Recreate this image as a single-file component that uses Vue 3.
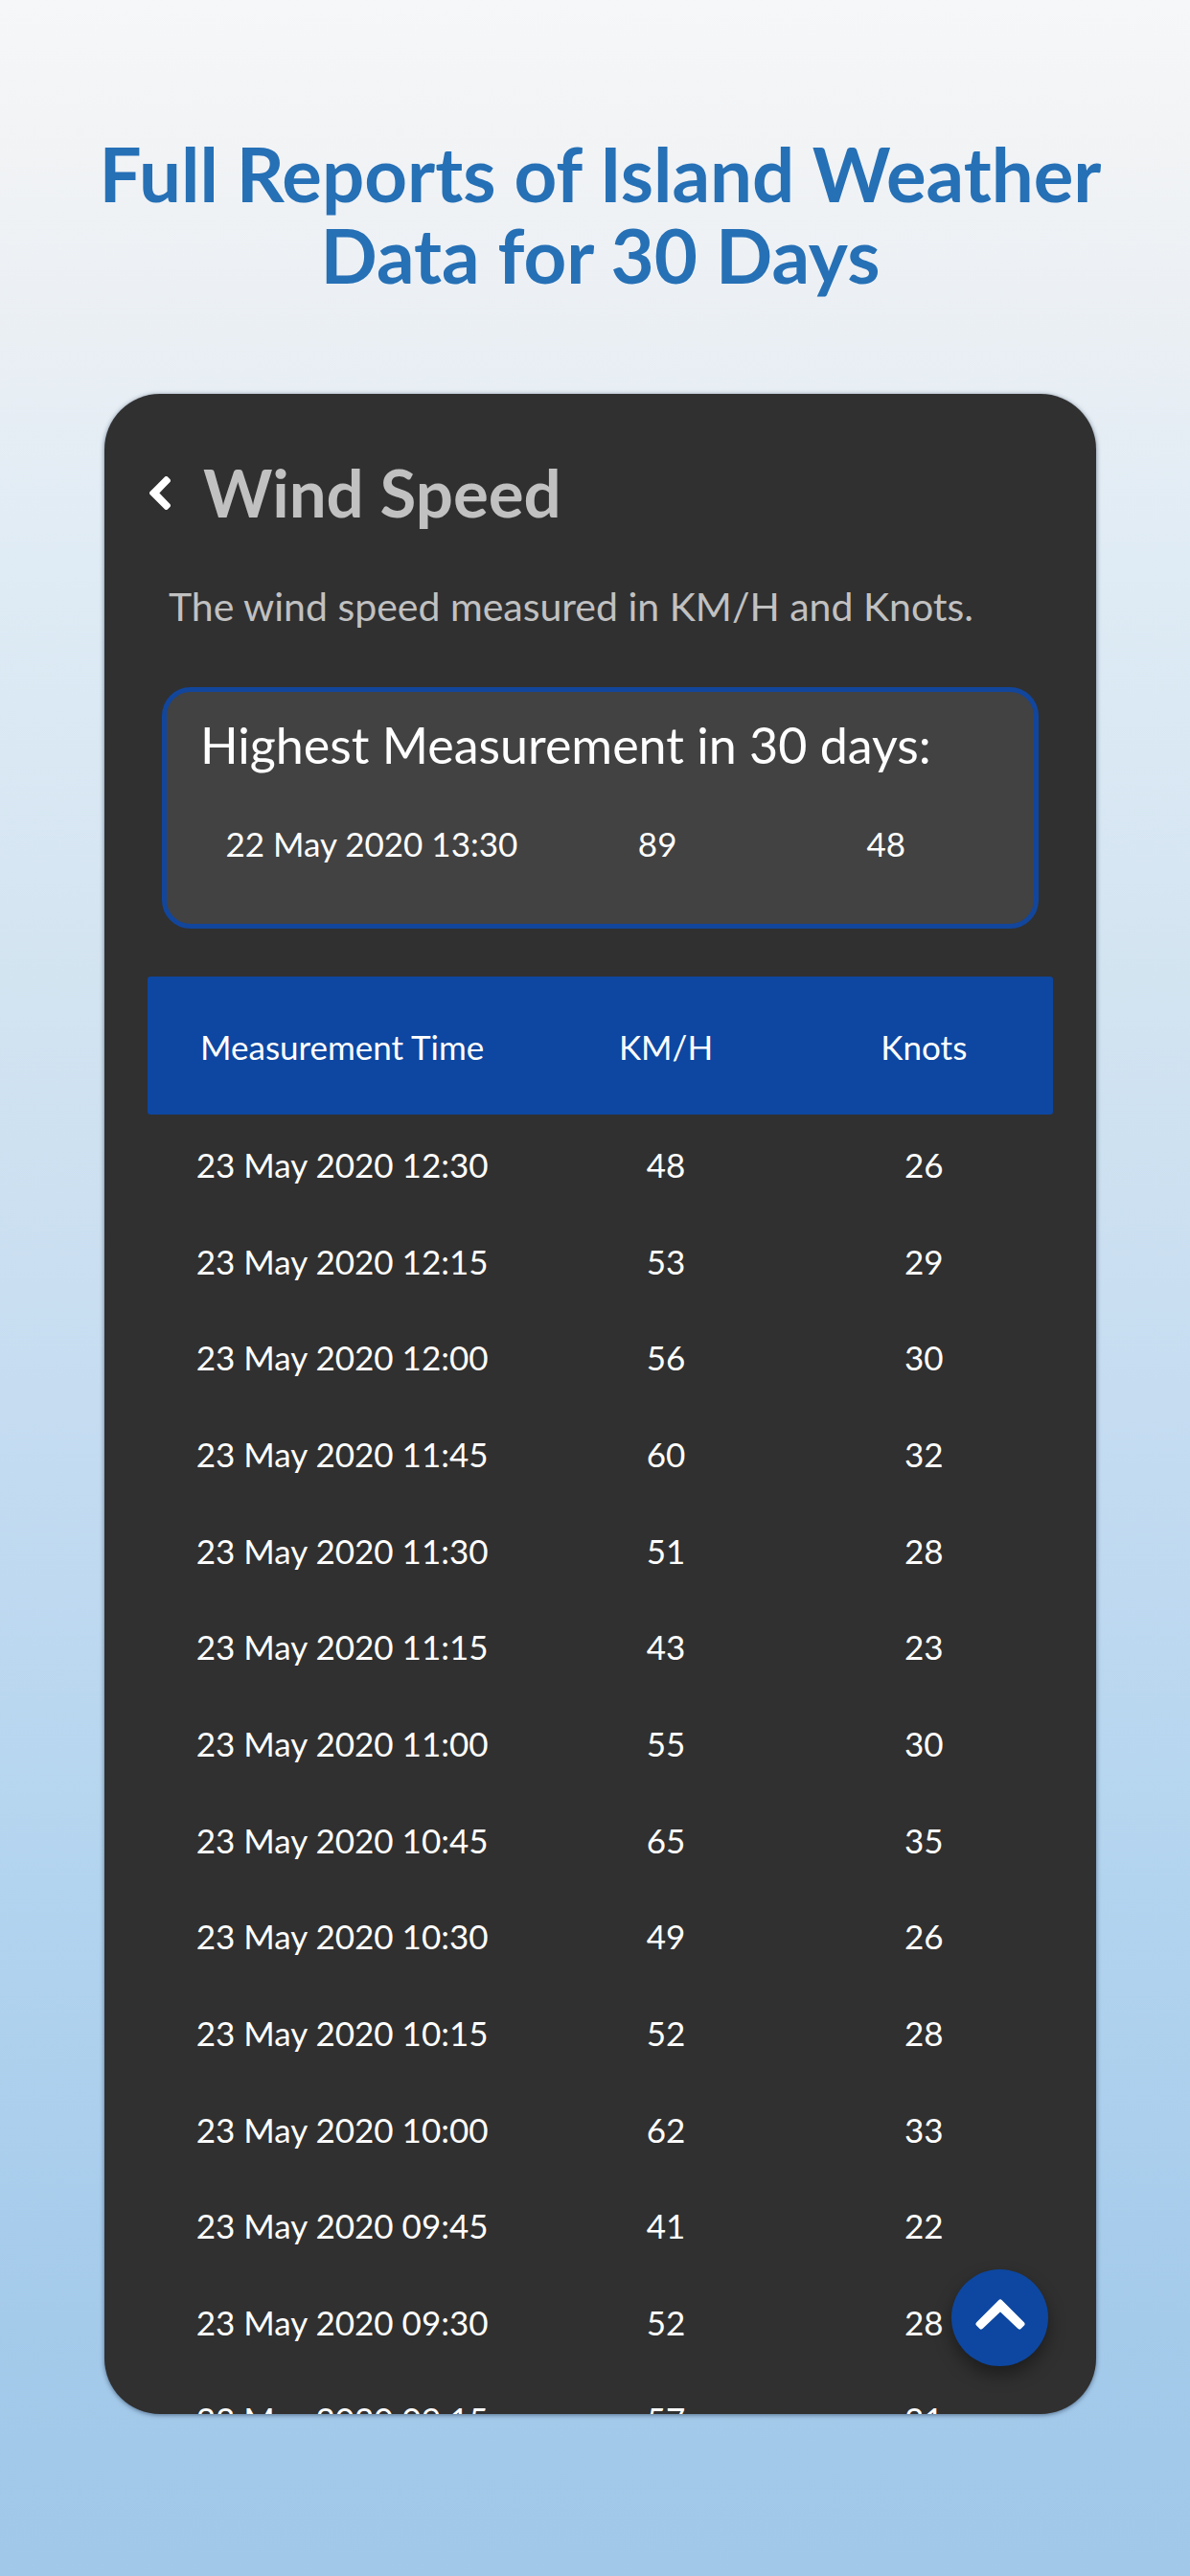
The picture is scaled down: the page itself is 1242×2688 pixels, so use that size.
<script setup>
import { ref } from 'vue'

const highest = { time: '22 May 2020 13:30', kmh: 89, knots: 48 }

const measurements = [
  { time: '23 May 2020 12:30', kmh: 48, knots: 26 },
  { time: '23 May 2020 12:15', kmh: 53, knots: 29 },
  { time: '23 May 2020 12:00', kmh: 56, knots: 30 },
  { time: '23 May 2020 11:45', kmh: 60, knots: 32 },
  { time: '23 May 2020 11:30', kmh: 51, knots: 28 },
  { time: '23 May 2020 11:15', kmh: 43, knots: 23 },
  { time: '23 May 2020 11:00', kmh: 55, knots: 30 },
  { time: '23 May 2020 10:45', kmh: 65, knots: 35 },
  { time: '23 May 2020 10:30', kmh: 49, knots: 26 },
  { time: '23 May 2020 10:15', kmh: 52, knots: 28 },
  { time: '23 May 2020 10:00', kmh: 62, knots: 33 },
  { time: '23 May 2020 09:45', kmh: 41, knots: 22 },
  { time: '23 May 2020 09:30', kmh: 52, knots: 28 },
  { time: '23 May 2020 09:15', kmh: 57, knots: 31 },
]

const content = ref(null)
const scrollToTop = () => content.value.scrollTo({ top: 0, behavior: 'smooth' })
</script>

<template>
  <div class="page">
    <h1 class="headline">Full Reports of Island Weather<br />Data for 30 Days</h1>

    <main class="screen">
      <div ref="content" class="content">
        <header class="bar">
          <button class="back" type="button" aria-label="Back">
            <svg viewBox="0 0 22 35" width="22" height="35" aria-hidden="true">
              <path d="M2 17.500 17.500 2 20 4.500 7.500 17.500 20 30.500 17.500 33Z" />
            </svg>
          </button>
          <h2 class="title">Wind Speed</h2>
        </header>

        <p class="intro">The wind speed measured in KM/H and Knots.</p>

        <section class="highest">
          <h3 class="highest-title">Highest Measurement in 30 days:</h3>
          <div class="highest-row">
            <span>{{ highest.time }}</span>
            <span>{{ highest.kmh }}</span>
            <span>{{ highest.knots }}</span>
          </div>
        </section>

        <table class="report">
          <thead>
            <tr>
              <th class="time" scope="col">Measurement Time</th>
              <th scope="col">KM/H</th>
              <th scope="col">Knots</th>
            </tr>
          </thead>
          <tbody>
            <tr v-for="m in measurements" :key="m.time">
              <td>{{ m.time }}</td>
              <td>{{ m.kmh }}</td>
              <td>{{ m.knots }}</td>
            </tr>
          </tbody>
        </table>
      </div>

      <button class="to-top" type="button" aria-label="Scroll to top" @click="scrollToTop">
        <svg viewBox="0 0 52 33" width="52" height="33" aria-hidden="true">
          <path d="M26 3 49 26 46 29 26 10 6 29 3 26Z" />
        </svg>
      </button>
    </main>
  </div>
</template>

<style>
body {
  margin: 0;
}
</style>

<style scoped>
.page {
  box-sizing: border-box;
  display: flex;
  flex-direction: column;
  height: 100vh;
  padding: 139px 98px 169px 109px;
  background: linear-gradient(
    #f6f7f9 0%,
    #f1f3f5 6%,
    #eaeff4 13%,
    #deebf5 23%,
    #d3e4f1 38%,
    #c5dcf1 55%,
    #b3d4ef 73%,
    #a5cbeb 90%,
    #a1c7e9 100%
  );
  color: #fff;
  font-family: Lato, "Liberation Sans", sans-serif;
}

.headline {
  align-self: center;
  margin: 0 0 102px;
  color: #2670b6;
  font-size: 78px;
  font-weight: 700;
  line-height: 85px;
  text-align: center;
  white-space: nowrap;
}

.screen {
  position: relative;
  flex: 1;
  min-height: 0;
  overflow: hidden;
  border-radius: 58px;
  background: #303030;
  box-shadow: 0 1px 5px rgba(30, 50, 80, 0.6);
}

.content {
  box-sizing: border-box;
  height: 100%;
  padding: 63px 45px 0;
  overflow: hidden;
}

.bar {
  display: flex;
  align-items: center;
  gap: 34px;
}

.back {
  display: flex;
  padding: 0;
  margin-left: 2px;
  border: 0;
  background: none;
  cursor: pointer;
}

.back path,
.to-top path {
  fill: #fff;
  stroke: #fff;
  stroke-linejoin: round;
}

.back path {
  stroke-width: 4;
}

.title {
  margin: 0;
  color: #c1c1c1;
  font-size: 69px;
  font-weight: 700;
  line-height: 80px;
}

.intro {
  margin: 55px 0 0 22px;
  color: #c1c1c1;
  font-size: 41px;
  line-height: 48px;
}

.highest {
  margin: 60px 15px 50px;
  padding: 25px 35px 63px;
  border: 5px solid #12469c;
  border-radius: 30px;
  background: #424242;
}

.highest-title {
  margin: 0 0 52px;
  font-size: 52px;
  font-weight: 400;
  line-height: 60px;
}

.highest-row {
  display: grid;
  grid-template-columns: 3fr 2fr 2fr;
  font-size: 35px;
  line-height: 42px;
  text-align: center;
}

.report {
  width: 100%;
  border-collapse: separate;
  border-spacing: 0;
  table-layout: fixed;
  font-size: 35px;
  line-height: 42px;
  text-align: center;
}

.report th,
.report td {
  box-sizing: border-box;
  padding: 2px 0 0;
  font-weight: 400;
}

.report th {
  height: 144px;
  background: #0d47a1;
}

.report .time {
  width: 43%;
}

.report th:first-child {
  border-radius: 3px 0 0 3px;
}

.report th:last-child {
  border-radius: 0 3px 3px 0;
}

.report td {
  height: 101px;
}

.report tr:nth-child(3n) td {
  height: 100px;
}

.to-top {
  position: absolute;
  right: 50px;
  bottom: 50px;
  display: flex;
  align-items: center;
  justify-content: center;
  width: 101px;
  height: 101px;
  padding: 0 0 6px;
  border: 0;
  border-radius: 50%;
  background: #0d47a1;
  box-shadow: 0 9px 18px rgba(0, 0, 0, 0.4);
  cursor: pointer;
}

.to-top path {
  stroke-width: 5;
}
</style>
